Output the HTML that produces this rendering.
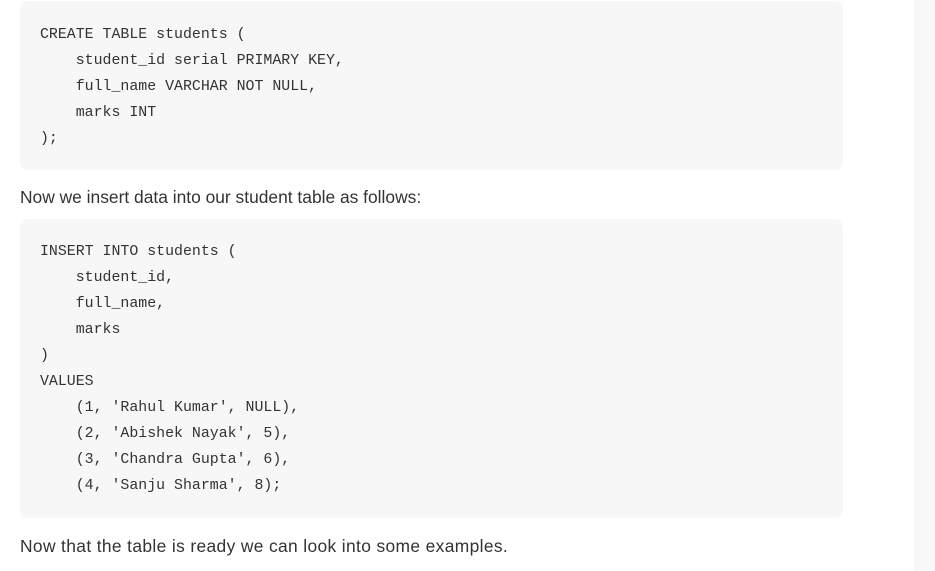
<!DOCTYPE html>
<html><head><style>
body{margin:0;background:#fff;width:935px;height:571px;overflow:hidden;position:relative;font-family:"Liberation Sans",sans-serif}
.side{position:absolute;left:914px;top:0;width:21px;height:571px;background:#f8f8f8}
pre{position:absolute;left:20px;width:783px;margin:0;background:#f7f7f7;border-radius:8px;padding:20px;font-family:"Liberation Mono",monospace;font-size:14.9px;line-height:26px;color:#333}
p{position:absolute;left:20px;margin:0;font-size:17.4px;color:#333;line-height:20px}
</style></head><body>
<div class="side"></div>
<pre style="top:1px;height:130px;padding-top:21px;padding-bottom:18px">CREATE TABLE students (
    student_id serial PRIMARY KEY,
    full_name VARCHAR NOT NULL,
    marks INT
);</pre>
<p style="top:187px">Now we insert data into our student table as follows:</p>
<pre style="top:219px;height:260px;padding-top:20px;padding-bottom:19px">INSERT INTO students (
    student_id,
    full_name,
    marks
)
VALUES
    (1, 'Rahul Kumar', NULL),
    (2, 'Abishek Nayak', 5),
    (3, 'Chandra Gupta', 6),
    (4, 'Sanju Sharma', 8);</pre>
<p style="top:536px;letter-spacing:0.36px">Now that the table is ready we can look into some examples.</p>
</body></html>
